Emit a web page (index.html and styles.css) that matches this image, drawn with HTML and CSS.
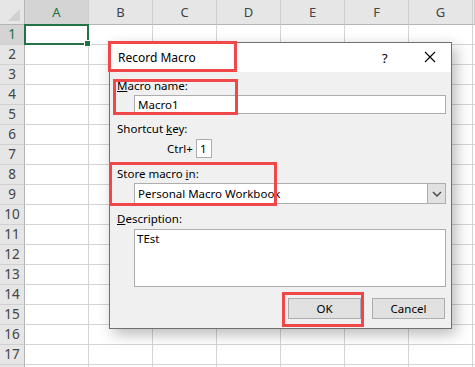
FILE: index.html
```html
<!DOCTYPE html>
<html>
<head>
<meta charset="utf-8">
<link rel="stylesheet" href="styles.css">
</head>
<body>
<div class="sheet">
  <div class="colheads">
    <div class="corner"><svg width="24" height="24" viewBox="0 0 24 24"><polygon points="20,9 20,21 8,21" fill="#d0d0d0"/></svg></div>
    <div class="ch sel">A</div><div class="ch">B</div><div class="ch">C</div><div class="ch">D</div><div class="ch">E</div><div class="ch">F</div><div class="ch">G</div><div class="ch last"></div>
  </div>
  <div class="body">
    <div class="rowheads">
      <div class="rh sel">1</div><div class="rh">2</div><div class="rh">3</div><div class="rh">4</div><div class="rh">5</div><div class="rh">6</div><div class="rh">7</div><div class="rh">8</div><div class="rh">9</div><div class="rh">10</div><div class="rh">11</div><div class="rh">12</div><div class="rh">13</div><div class="rh">14</div><div class="rh">15</div><div class="rh">16</div><div class="rh">17</div><div class="rh"></div>
    </div>
    <div class="cells">
      <div class="selbox"><span class="handle"></span></div>
    </div>
  </div>
</div>

<div class="dialog">
  <div class="titlebar">
    <span class="title">Record Macro</span>
    <span class="help">?</span>
    <span class="close"><svg width="12" height="12" viewBox="0 0 12 12"><path d="M1 1 L11 11 M11 1 L1 11" stroke="#000" stroke-width="1.1" fill="none"/></svg></span>
  </div>
  <div class="content">
    <div class="label l-name"><u>M</u>acro name:</div>
    <div class="field input"><span>Macro1</span></div>
    <div class="label l-short">Shortcut <u>k</u>ey:</div>
    <div class="ctrlrow"><span>Ctrl+</span><div class="keybox">1</div></div>
    <div class="label l-store">Store macro <u>i</u>n:</div>
    <div class="field select"><span class="seltext">Personal Macro Workbook</span><span class="dd"><svg width="10" height="6" viewBox="0 0 10 6"><path d="M1 1 L5 5 L9 1" stroke="#444" stroke-width="1.4" fill="none"/></svg></span></div>
    <div class="label l-desc"><u>D</u>escription:</div>
    <div class="field textarea"><span>TEst</span></div>
    <div class="buttons">
      <div class="btn">OK</div>
      <div class="btn">Cancel</div>
    </div>
  </div>
  <div class="mark m-title"></div>
  <div class="mark m-name"></div>
  <div class="mark m-store"></div>
  <div class="mark m-ok"></div>
</div>
</body>
</html>
```
FILE: styles.css
```css
html, body {
  margin: 0;
  padding: 0;
}
body {
  width: 475px;
  height: 367px;
  overflow: hidden;
  background: #fff;
  font-family: "Noto Sans", "Open Sans", sans-serif;
  position: relative;
}
.sheet {
  width: 475px;
  height: 367px;
  display: flex;
  flex-direction: column;
}
.colheads {
  display: flex;
  height: 25px;
  flex: none;
}
.corner {
  width: 25px;
  height: 25px;
  box-sizing: border-box;
  background: #e6e6e6;
  border-right: 1px solid #b4b4b4;
  border-bottom: 1px solid #b4b4b4;
}
.corner svg { display: block; }
.ch {
  width: 64px;
  flex: none;
  height: 25px;
  box-sizing: border-box;
  background: #e6e6e6;
  border-right: 1px solid #d0d0d0;
  border-bottom: 1px solid #b4b4b4;
  color: #444;
  font-size: 13px;
  line-height: 24px;
  text-align: center;
}
.ch.last { flex: 1; width: auto; }
.ch.sel {
  background: #d4d4d4;
  color: #217346;
  border-bottom: 1px solid #a8a8a8;
}
.body {
  display: flex;
  flex: 1;
}
.rowheads {
  width: 25px;
  flex: none;
  display: flex;
  flex-direction: column;
}
.rh {
  height: 20px;
  flex: none;
  box-sizing: border-box;
  background: #e6e6e6;
  border-right: 1px solid #b4b4b4;
  border-bottom: 1px solid #d0d0d0;
  color: #444;
  font-size: 13.5px;
  line-height: 19px;
  text-align: center;
}
.rh.sel {
  background: #d4d4d4;
  color: #217346;
}
.cells {
  flex: 1;
  position: relative;
  background-image:
    repeating-linear-gradient(to right, transparent 0 63px, #d4d4d4 63px 64px),
    repeating-linear-gradient(to bottom, transparent 0 19px, #d4d4d4 19px 20px);
}
.selbox {
  position: absolute;
  left: -1px;
  top: -1px;
  width: 65px;
  height: 21px;
  box-sizing: border-box;
  border: 2px solid #217346;
}
.handle {
  position: absolute;
  right: -4px;
  bottom: -4px;
  width: 5px;
  height: 5px;
  background: #217346;
  border: 1px solid #fff;
}

/* dialog */
.dialog {
  position: absolute;
  left: 109px;
  top: 42px;
  width: 343px;
  height: 287px;
  box-sizing: border-box;
  border: 1px solid #707070;
  background: #f0f0f0;
  box-shadow: 4px 5px 14px rgba(0,0,0,0.28);
  font-size: 12px;
  color: #000;
}
.titlebar {
  height: 29px;
  background: #fff;
  display: flex;
  align-items: center;
  position: relative;
}
.title {
  margin-left: 8px;
  font-size: 12px;
}
.help {
  position: absolute;
  left: 272px;
  top: 6px;
  font-size: 13px;
}
.close {
  position: absolute;
  left: 314px;
  top: 8px;
  width: 12px;
  height: 12px;
}
.close svg { display: block; }
.content {
  padding: 0 6px 0 7px;
  display: flex;
  flex-direction: column;
}
.label {
  height: 16px;
  line-height: 16px;
  font-size: 11.5px;
}
.label u { text-underline-offset: 1px; }
.l-name { margin-top: 6px; }
.l-short { margin-top: 7px; }
.l-store { margin-top: 8px; }
.l-desc { margin-top: 7px; }
.field {
  margin-left: 17px;
  width: 312px;
  box-sizing: border-box;
  border: 1px solid #adadad;
  background: #fff;
  font-size: 11.5px;
}
.input {
  margin-top: 1px;
  height: 19px;
  line-height: 17px;
  padding-left: 3px;
}
.ctrlrow {
  margin-top: 2px;
  display: flex;
  align-items: center;
  height: 19px;
  font-size: 11.5px;
}
.ctrlrow span {
  margin-left: 50px;
  width: 29px;
}
.keybox {
  width: 16px;
  height: 19px;
  box-sizing: border-box;
  border: 1px solid #adadad;
  background: #fff;
  line-height: 17px;
  padding-left: 3px;
}
.select {
  margin-top: 1px;
  height: 21px;
  display: flex;
  line-height: 19px;
}
.seltext {
  flex: 1;
  padding-left: 3px;
}
.dd {
  width: 17px;
  background: #e1e1e1;
  border-left: 1px solid #adadad;
  display: flex;
  align-items: center;
  justify-content: center;
}
.textarea {
  margin-top: 2px;
  height: 58px;
  padding: 1px 0 0 2px;
  line-height: 16px;
}
.buttons {
  margin-top: 11px;
  display: flex;
  justify-content: flex-end;
  gap: 11px;
}
.btn {
  width: 73px;
  height: 21px;
  box-sizing: border-box;
  border: 1px solid #adadad;
  background: #e1e1e1;
  text-align: center;
  line-height: 19px;
  font-size: 11.5px;
}

/* annotation boxes */
.mark {
  position: absolute;
  box-sizing: border-box;
  border: 3px solid #f04848;
}
.m-title { left: -2px; top: -2px; width: 129px; height: 31px; }
.m-name { left: 3px; top: 36px; width: 125px; height: 36px; }
.m-store { left: -1px; top: 119px; width: 168px; height: 44px; }
.m-ok { left: 172px; top: 249px; width: 82px; height: 35px; }
```
